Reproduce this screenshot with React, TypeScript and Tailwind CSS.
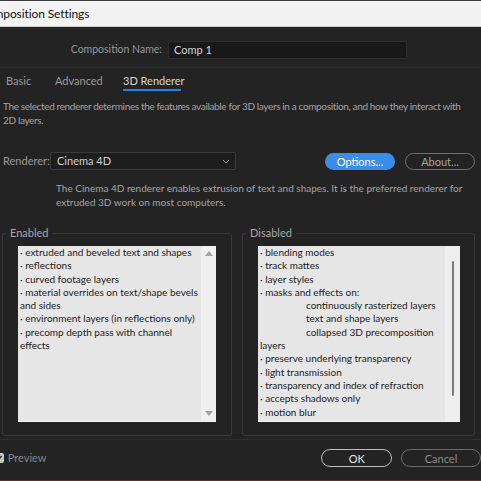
import React from "react";

const enabledLines = [
  "· extruded and beveled text and shapes",
  "· reflections",
  "· curved footage layers",
  "· material overrides on text/shape bevels",
  "and sides",
  "· environment layers (in reflections only)",
  "· precomp depth pass with channel",
  "effects",
];

// indent: true for the tab-indented sub items
const disabledLines: { text: string; indent?: boolean }[] = [
  { text: "· blending modes" },
  { text: "· track mattes" },
  { text: "· layer styles" },
  { text: "· masks and effects on:" },
  { text: "continuously rasterized layers", indent: true },
  { text: "text and shape layers", indent: true },
  { text: "collapsed 3D precomposition", indent: true },
  { text: "layers" },
  { text: "· preserve underlying transparency" },
  { text: "· light transmission" },
  { text: "· transparency and index of refraction" },
  { text: "· accepts shadows only" },
  { text: "· motion blur" },
];

const Tab = ({ label, active, width }: { label: string; active?: boolean; width: string }) => (
  <div className={`flex flex-col ${width}`}>
    <span
      className={`leading-[14px] text-[11px] whitespace-nowrap ${active ? "text-[#d6d6d6] text-center" : "text-[#9a9a9a]"}`}
    >
      {label}
    </span>
    <div className={`mt-[1px] h-[2px] ${active ? "bg-[#2f7fe0]" : ""}`} />
  </div>
);

export default function App() {
  return (
    <div
      className="w-[481px] h-[481px] overflow-hidden bg-[#232323] flex flex-col"
      style={{ fontFamily: "Lato, 'Noto Sans', sans-serif" }}
    >
      {/* title bar */}
      <div className="h-px bg-[#3b3b3b]" />
      <div className="h-[25px] bg-[#f2f2f2] flex items-center">
        <span className="ml-[-21px] text-[12px] tracking-[-0.1px] text-[#111] whitespace-nowrap">Composition Settings</span>
      </div>
      <div className="h-px bg-[#cdcdcd]" />

      {/* name row */}
      <div className="mt-[14px] flex items-center h-[18px]">
        <span className="w-[162px] text-right text-[10.5px] text-[#959595] whitespace-nowrap">Composition Name:</span>
        <div className="ml-[6px] w-[239px] h-[18px] rounded-[3px] bg-[#181818] border border-[#2e2e2e] flex items-center px-[5px]">
          <span className="text-[11px] text-[#d4d4d4]">Comp 1</span>
        </div>
      </div>
      <div className="mt-[8px] h-px bg-[#2c2c2c]" />

      {/* tabs */}
      <div className="flex pt-[6px] pl-[6px]">
        <Tab label="Basic" width="w-[49px]" />
        <Tab label="Advanced" width="w-[68px]" />
        <Tab label="3D Renderer" width="w-[58px]" active />
      </div>

      <p className="mt-[8px] px-[3px] text-[10px] tracking-[-0.36px] leading-[14px] text-[#a3a3a3] whitespace-nowrap">
        The selected renderer determines the features available for 3D layers in a composition, and how they interact with
        <br />
        2D layers.
      </p>

      {/* renderer row */}
      <div className="mt-[25px] flex items-center h-[18px] pl-[3px]">
        <span className="w-[47px] text-[11px] text-[#9a9a9a]">Renderer:</span>
        <div className="w-[186px] h-[18px] rounded-[2px] bg-[#1d1d1d] border border-[#3a3a3a] flex items-center justify-between pl-[6px] pr-[5px]">
          <span className="text-[11px] text-[#d0d0d0]">Cinema 4D</span>
          <svg width="8" height="5" viewBox="0 0 8 5" fill="none">
            <path d="M1 1l3 3 3-3" stroke="#9a9a9a" strokeWidth="1" />
          </svg>
        </div>
        <button className="ml-[89px] w-[70px] h-[17px] rounded-full bg-[#3a8ee8] text-[11px] text-white leading-none">
          Options...
        </button>
        <button className="ml-[10px] w-[70px] h-[17px] rounded-full border border-[#707070] text-[11px] text-[#a6a6a6] leading-none">
          About...
        </button>
      </div>

      <p className="mt-[11px] pl-[56px] text-[10px] leading-[14px] text-[#a3a3a3] whitespace-nowrap">
        The Cinema 4D renderer enables extrusion of text and shapes. It is the preferred renderer for
        <br />
        extruded 3D work on most computers.
      </p>

      {/* enabled / disabled groups */}
      <div className="mt-[17px] flex pl-[2px] gap-[10px]">
        <fieldset className="w-[230px] border border-[#383838] rounded-[3px] pl-[3px] pb-[13px]">
          <legend className="px-[4px] text-[11px] leading-[14px] text-[#a6a6a6]">Enabled</legend>
          <div className="pl-[12px] pt-[6px]">
            <div className="w-[198px] h-[176px] bg-[#e6e6e6] border-b border-[#f4f4f4] flex">
              <div className="flex-1 pl-[2px] text-[10px] leading-[13.3px] text-[#1c1c1c]">
                {enabledLines.map((l) => (
                  <div key={l} className="whitespace-nowrap">{l}</div>
                ))}
              </div>
              <div className="w-[15px] bg-[#efefef] flex flex-col items-center justify-between py-[5px]">
                <svg width="8" height="5" viewBox="0 0 8 5">
                  <path d="M0 5L4 0l4 5z" fill="#a2a2a2" />
                </svg>
                <svg width="8" height="5" viewBox="0 0 8 5">
                  <path d="M0 0l4 5 4-5z" fill="#a2a2a2" />
                </svg>
              </div>
            </div>
          </div>
        </fieldset>

        <fieldset className="w-[233px] border border-[#383838] rounded-[3px] pl-[3px] pb-[13px]">
          <legend className="px-[4px] text-[11px] leading-[14px] text-[#a6a6a6]">Disabled</legend>
          <div className="pl-[12px] pt-[6px]">
            <div className="w-[202px] h-[176px] bg-[#e6e6e6] border-b border-[#f4f4f4] flex">
              <div className="flex-1 pl-[2px] text-[10px] leading-[13.3px] text-[#1c1c1c]">
                {disabledLines.map((l) => (
                  <div key={l.text} className={`whitespace-nowrap ${l.indent ? "pl-[46px]" : ""}`}>
                    {l.text}
                  </div>
                ))}
              </div>
              <div className="w-[15px] bg-[#eeeeee] flex justify-center pt-[15px]">
                <div className="w-[2px] h-[135px] bg-[#7a7a7a] rounded-full" />
              </div>
            </div>
          </div>
        </fieldset>
      </div>

      <div className="mt-[3px] h-px bg-[#2e2e2e]" />

      {/* bottom row */}
      <div className="mt-[9px] flex items-center h-[18px]">
        <div className="ml-[-5px] w-[10px] h-[10px] rounded-[2px] bg-[#c4c4c4] flex items-center justify-center">
          <svg width="8" height="8" viewBox="0 0 8 8" fill="none">
            <path d="M1.5 4.2l1.8 1.8L6.6 2" stroke="#333" strokeWidth="1.4" />
          </svg>
        </div>
        <span className="ml-[4px] text-[11px] text-[#858585]">Preview</span>
        <button className="ml-[275px] w-[80px] h-[18px] rounded-full border-[1.5px] border-[#bdbdbd] text-[11px] text-[#e6e6e6] leading-none">
          OK
        </button>
        <button className="ml-[9px] shrink-0 w-[80px] h-[18px] rounded-full border border-[#6c6c6c] text-[11px] text-[#8c8c8c] leading-none">
          Cancel
        </button>
      </div>

      <div className="flex-1" />
      <div className="h-px bg-[#5a2e2e]" />
    </div>
  );
}
